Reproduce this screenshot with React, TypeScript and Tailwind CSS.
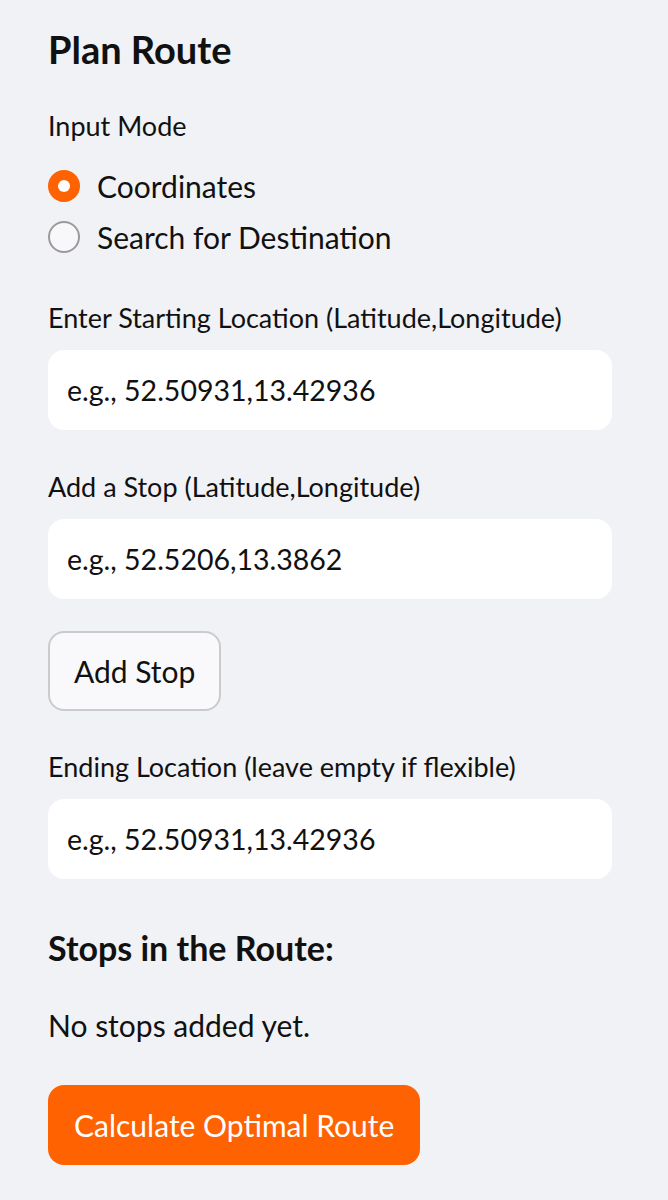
import React, { useState } from 'react';

const font = { fontFamily: 'Lato, "Liberation Sans", sans-serif' };

const TextField = ({ label, placeholder }: { label: string; placeholder: string }) => (
  <div className="flex flex-col">
    <label className="text-[27px] leading-[32px] text-[#111]">{label}</label>
    <input
      className="mt-[16px] h-[80px] w-full rounded-[16px] bg-white px-[19px] text-[28.5px] text-[#111] placeholder:text-[#111] outline-none"
      placeholder={placeholder}
    />
  </div>
);

export default function App() {
  const [mode, setMode] = useState('coords');

  const options = [
    { id: 'coords', label: 'Coordinates' },
    { id: 'search', label: 'Search for Destination' },
  ];

  return (
    <div className="min-h-[1200px] w-[668px] bg-[#f0f2f6] pl-[48px] pr-[56px] pt-[26px] text-[#111]" style={font}>
      <h2 className="text-[38px] font-bold leading-[46px]">Plan Route</h2>

      <div className="mt-[38px] text-[27px] leading-[32px]">Input Mode</div>
      <div className="mt-[28px] flex flex-col gap-[19px]">
        {options.map((o) => (
          <button key={o.id} onClick={() => setMode(o.id)} className="flex items-center gap-[17px] text-left">
            {mode === o.id ? (
              <span className="flex h-[32px] w-[32px] items-center justify-center rounded-full bg-[#ff6200]">
                <span className="h-[12px] w-[12px] rounded-full bg-white" />
              </span>
            ) : (
              <span className="h-[32px] w-[32px] rounded-full border-2 border-[#9a9a9c] bg-[#f8f8fa]" />
            )}
            <span className="text-[30px] leading-[32px]">{o.label}</span>
          </button>
        ))}
      </div>

      <div className="mt-[49px] flex flex-col gap-[41px]">
        <TextField label="Enter Starting Location (Latitude,Longitude)" placeholder="e.g., 52.50931,13.42936" />
        <TextField label="Add a Stop (Latitude,Longitude)" placeholder="e.g., 52.5206,13.3862" />
      </div>

      <button className="mt-[32px] h-[80px] rounded-[16px] border-2 border-[#cbcbcf] bg-[#f9f9fb] px-[24px] text-[30px]">
        Add Stop
      </button>

      <div className="mt-[40px]">
        <TextField label="Ending Location (leave empty if flexible)" placeholder="e.g., 52.50931,13.42936" />
      </div>

      <h3 className="mt-[47px] text-[34px] font-bold leading-[44px]">Stops in the Route:</h3>
      <p className="mt-[35px] text-[30px] leading-[40px]">No stops added yet.</p>

      <button className="mt-[40px] h-[80px] rounded-[16px] bg-[#ff6200] px-[26px] text-[30px] text-white">
        Calculate Optimal Route
      </button>
    </div>
  );
}
